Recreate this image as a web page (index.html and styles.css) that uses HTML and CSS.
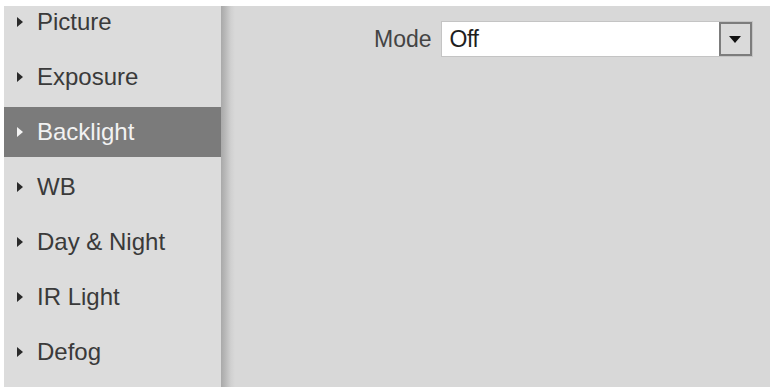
FILE: index.html
```html
<!DOCTYPE html>
<html>
<head>
<meta charset="utf-8">
<link rel="stylesheet" href="styles.css">
</head>
<body>
<div class="frame">
  <nav class="sidebar">
    <ul class="menu">
      <li class="item"><span class="arrow"></span>Picture</li>
      <li class="item"><span class="arrow"></span>Exposure</li>
      <li class="item active"><span class="arrow"></span>Backlight</li>
      <li class="item"><span class="arrow"></span>WB</li>
      <li class="item"><span class="arrow"></span>Day &amp; Night</li>
      <li class="item"><span class="arrow"></span>IR Light</li>
      <li class="item"><span class="arrow"></span>Defog</li>
    </ul>
  </nav>
  <div class="divider"></div>
  <main class="content">
    <div class="field">
      <label class="label">Mode</label>
      <div class="select">
        <span class="value">Off</span>
        <span class="button"><span class="caret"></span></span>
      </div>
    </div>
  </main>
</div>
</body>
</html>
```
FILE: styles.css
```css
html, body {
  margin: 0;
  padding: 0;
  background: #ffffff;
  width: 773px;
  height: 387px;
  overflow: hidden;
}
body {
  font-family: "Liberation Sans", Arial, sans-serif;
  padding: 6px 3px 0 4px;
  box-sizing: border-box;
}
.frame {
  display: flex;
  height: 381px;
}
.sidebar {
  width: 217px;
  background: #dcdcdc;
  overflow: hidden;
  flex: none;
}
.menu {
  list-style: none;
  margin: -9px 0 0 0;
  padding: 0;
  display: flex;
  flex-direction: column;
  gap: 5px;
}
.item {
  height: 50px;
  line-height: 50px;
  font-size: 24px;
  color: #3a3a3a;
  display: flex;
  align-items: center;
  padding-left: 13px;
}
.arrow {
  width: 0;
  height: 0;
  border-left: 6px solid #2a2a2a;
  border-top: 5px solid transparent;
  border-bottom: 5px solid transparent;
  margin-right: 14px;
}
.item.active {
  background: #7b7b7b;
  color: #f2f2f2;
}
.item.active .arrow {
  border-left-color: #f4f4f4;
}
.divider {
  width: 14px;
  flex: none;
  background: linear-gradient(to right, #a9a9a9 0%, #b8b8b8 30%, #d0d0d0 70%, #d8d8d8 100%);
}
.content {
  flex: 1;
  background: #d8d8d8;
  padding: 15px 0 0 139px;
}
.field {
  display: flex;
  align-items: center;
  gap: 9px;
}
.label {
  font-size: 23px;
  color: #444;
}
.select {
  width: 312px;
  height: 36px;
  box-sizing: border-box;
  background: #fff;
  border: 1px solid #c4c4c4;
  display: flex;
  align-items: center;
  justify-content: space-between;
}
.value {
  font-size: 23px;
  color: #1e1e1e;
  padding-left: 8px;
  letter-spacing: -0.5px;
}
.button {
  width: 33px;
  height: 34px;
  box-sizing: border-box;
  border: 2px solid #7c7c7c;
  background: #dadada;
  display: flex;
  align-items: center;
  justify-content: center;
}
.caret {
  width: 0;
  height: 0;
  border-top: 7px solid #111;
  border-left: 6px solid transparent;
  border-right: 6px solid transparent;
}
```
